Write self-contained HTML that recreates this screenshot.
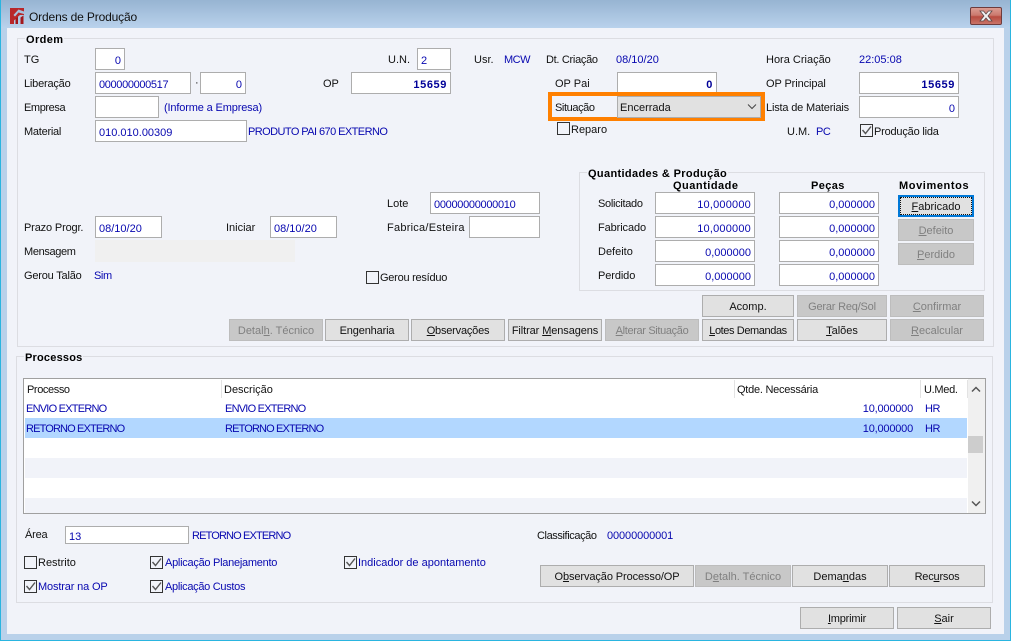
<!DOCTYPE html>
<html lang="pt"><head><meta charset="utf-8"><title>Ordens de Produção</title>
<style>
html,body{margin:0;padding:0;width:1011px;height:641px;overflow:hidden;background:#b9d1ea}
*{box-sizing:border-box}
body{font:11px/14px "Liberation Sans",sans-serif;color:#111;position:relative}
#title{position:absolute;left:0;top:0;width:1011px;height:28px;background:linear-gradient(#97b4d2,#b9d2ec)}
#frameb{position:absolute;left:0;top:0;width:1011px;height:641px;border:1px solid #2ab5e0;border-top:0;pointer-events:none}
#client{position:absolute;left:7px;top:28px;width:997px;height:606px;background:#f1f3f9}
.a{position:absolute}
.t{position:absolute;white-space:nowrap;height:14px;line-height:14px;margin-top:1px}
.u{color:#0808b0}
.l{font-weight:bold;color:#000;background:#f1f3f9;padding:0 1px}
.h{font-weight:bold;color:#000}
.g{position:absolute;border:1px solid #dcdde2}
.i{position:absolute;background:#fff;border:1px solid #adadad;height:22px;line-height:25px;color:#0808b0;padding:0 3px;white-space:nowrap;overflow:hidden}
.r{text-align:right}
.n{font-weight:bold;color:#000098;letter-spacing:.6px}
.b{position:absolute;height:22px;background:#e1e1e1;border:1px solid #adadad;text-align:center;line-height:22px;color:#111;white-space:nowrap}
.d{background:#c8c8c8;border-color:#bdbdbd;color:#808080}
.c{position:absolute;width:13px;height:13px;border:1px solid #333}
.c svg{position:absolute;left:0;top:0}
</style></head><body>
<div id="title"></div>
<svg class="a" style="left:10px;top:8px" width="15" height="16" viewBox="0 0 15 16"><path d="M0 0h14v3.500L8.500 1.500 3.500 7 5 8.500 8.500 4.500 14 6v1H10L7 9.500 4 12.500V16H0z" fill="#b9272a"/><path d="M5.500 10.500L8 8.500V16H5.500zM10.500 9.500L13.500 7.500V16H10.500z" fill="#a3181d"/></svg>
<div class="t" style="left:29px;top:9px;font-size:12px;color:#111;letter-spacing:-.15px">Ordens de Produção</div>
<div class="a" style="left:970px;top:7px;width:32px;height:18px;border:1px solid #6e3c3c;border-radius:2px;background:linear-gradient(#dc9d93 0,#cb7a6e 45%,#b84c40 55%,#c97468 100%)"></div>
<svg class="a" style="left:978px;top:10px" width="16" height="12" viewBox="0 0 16 12"><path d="M2 1h3.500L8 4l2.500-3H14l-4 5 4 5h-3.500L8 8l-2.500 3H2l4-5z" fill="#f2f2f2" stroke="#5c4a4a" stroke-width=".8"/></svg>
<div id="client"></div>
<div id="frameb"></div>

<!-- Ordem -->
<div class="g" style="left:17px;top:38px;width:977px;height:309px"></div>
<div class="t l" style="left:25px;top:32px;letter-spacing:.4px">Ordem</div>
<div class="t" style="left:24px;top:52px">TG</div>
<div class="i r" style="left:95px;top:48px;width:30px">0</div>
<div class="t" style="left:24px;top:76px;letter-spacing:-.2px">Liberação</div>
<div class="i" style="left:95px;top:72px;width:96px;letter-spacing:-.35px">000000000517</div>
<div class="t" style="left:195px;top:75px">·</div>
<div class="i r" style="left:200px;top:72px;width:46px">0</div>
<div class="t" style="left:24px;top:100px;letter-spacing:-.4px">Empresa</div>
<div class="i" style="left:95px;top:96px;width:64px"></div>
<div class="t u" style="left:164px;top:100px;letter-spacing:-.15px">(Informe a Empresa)</div>
<div class="t" style="left:24px;top:124px;letter-spacing:-.25px">Material</div>
<div class="i" style="left:95px;top:120px;width:152px">010.010.00309</div>
<div class="t u" style="left:248px;top:124px;letter-spacing:-.57px">PRODUTO PAI 670 EXTERNO</div>
<div class="t" style="left:388px;top:52px">U.N.</div>
<div class="i" style="left:417px;top:48px;width:34px">2</div>
<div class="t" style="left:323px;top:76px">OP</div>
<div class="i r n" style="left:351px;top:72px;width:100px">15659</div>
<div class="t" style="left:474px;top:52px">Usr.</div>
<div class="t u" style="left:504px;top:52px;letter-spacing:-.5px">MCW</div>
<div class="t" style="left:546px;top:52px;letter-spacing:-.3px">Dt. Criação</div>
<div class="t u" style="left:616px;top:52px">08/10/20</div>
<div class="t" style="left:766px;top:52px">Hora Criação</div>
<div class="t u" style="left:859px;top:52px">22:05:08</div>
<div class="t" style="left:555px;top:76px">OP Pai</div>
<div class="i r n" style="left:617px;top:72px;width:100px">0</div>
<div class="t" style="left:766px;top:76px;letter-spacing:-.1px">OP Principal</div>
<div class="i r n" style="left:859px;top:72px;width:100px">15659</div>
<div class="a" style="left:548px;top:92px;width:217px;height:29px;border:4px solid #ff8000"></div>
<div class="t" style="left:555px;top:100px;letter-spacing:-.4px">Situação</div>
<div class="i" style="left:617px;top:96px;width:144px;background:#e1e1e1;color:#111;line-height:22px;padding-left:2px">Encerrada</div>
<svg class="a" style="left:747px;top:104px" width="10" height="6" viewBox="0 0 10 6"><path d="M1 .5l4 4 4-4" fill="none" stroke="#444" stroke-width="1"/></svg>
<div class="t" style="left:766px;top:100px;letter-spacing:-.18px">Lista de Materiais</div>
<div class="i r u" style="left:859px;top:96px;width:100px">0</div>
<div class="c" style="left:557px;top:122px"></div>
<div class="t" style="left:571px;top:122px">Reparo</div>
<div class="t" style="left:787px;top:124px">U.M.</div>
<div class="t u" style="left:816px;top:124px;letter-spacing:-.5px">PC</div>
<div class="c" style="left:860px;top:124px"><svg width="11" height="11" viewBox="0 0 11 11"><path d="M1.500 5l3 3.500L10 1.500" fill="none" stroke="#555" stroke-width="1.400"/></svg></div>
<div class="t" style="left:874px;top:124px;letter-spacing:-.2px">Produção lida</div>

<div class="t" style="left:387px;top:196px">Lote</div>
<div class="i" style="left:430px;top:192px;width:110px;letter-spacing:-.3px">00000000000010</div>
<div class="t" style="left:24px;top:220px;letter-spacing:-.15px">Prazo Progr.</div>
<div class="i" style="left:95px;top:216px;width:67px">08/10/20</div>
<div class="t" style="left:226px;top:220px">Iniciar</div>
<div class="i" style="left:270px;top:216px;width:67px">08/10/20</div>
<div class="t" style="left:387px;top:220px;letter-spacing:.25px">Fabrica/Esteira</div>
<div class="i" style="left:469px;top:216px;width:71px"></div>
<div class="t" style="left:24px;top:244px;letter-spacing:-.35px">Mensagem</div>
<div class="a" style="left:95px;top:240px;width:200px;height:22px;background:#f0f0f0"></div>
<div class="t" style="left:24px;top:268px;letter-spacing:-.2px">Gerou Talão</div>
<div class="t u" style="left:94px;top:268px;letter-spacing:-.4px">Sim</div>
<div class="c" style="left:366px;top:271px"></div>
<div class="t" style="left:380px;top:270px;letter-spacing:-.25px">Gerou resíduo</div>

<!-- Quantidades -->
<div class="g" style="left:579px;top:172px;width:406px;height:119px"></div>
<div class="t l" style="left:587px;top:166px;letter-spacing:.35px">Quantidades &amp; Produção</div>
<div class="t h" style="left:673px;top:178px;letter-spacing:.5px">Quantidade</div>
<div class="t h" style="left:811px;top:178px;letter-spacing:.4px">Peças</div>
<div class="t h" style="left:899px;top:178px;letter-spacing:.6px">Movimentos</div>
<div class="t" style="left:598px;top:196px;letter-spacing:-.3px">Solicitado</div>
<div class="t" style="left:598px;top:220px;letter-spacing:-.1px">Fabricado</div>
<div class="t" style="left:598px;top:244px">Defeito</div>
<div class="t" style="left:598px;top:268px;letter-spacing:-.1px">Perdido</div>
<div class="i r" style="left:655px;top:192px;width:100px;letter-spacing:.2px">10,000000</div>
<div class="i r" style="left:655px;top:216px;width:100px;letter-spacing:.2px">10,000000</div>
<div class="i r" style="left:655px;top:240px;width:100px">0,000000</div>
<div class="i r" style="left:655px;top:264px;width:100px">0,000000</div>
<div class="i r" style="left:779px;top:192px;width:100px">0,000000</div>
<div class="i r" style="left:779px;top:216px;width:100px">0,000000</div>
<div class="i r" style="left:779px;top:240px;width:100px">0,000000</div>
<div class="i r" style="left:779px;top:264px;width:100px">0,000000</div>
<div class="b" style="left:898px;top:195px;width:76px;border:2px solid #0078d7;line-height:20px;outline:1px dotted #111;outline-offset:-3px"><u>F</u>abricado</div>
<div class="b d" style="left:898px;top:219px;width:76px"><u>D</u>efeito</div>
<div class="b d" style="left:898px;top:243px;width:76px"><u>P</u>erdido</div>

<div class="b" style="left:702px;top:295px;width:92px">Acomp.</div>
<div class="b d" style="left:797px;top:295px;width:90px;letter-spacing:-.2px">Gerar Req/Sol</div>
<div class="b d" style="left:890px;top:295px;width:94px"><u>C</u>onfirmar</div>
<div class="b d" style="left:229px;top:319px;width:94px">Detal<u>h</u>. Técnico</div>
<div class="b" style="left:325px;top:319px;width:84px;letter-spacing:-.15px">En<u>g</u>enharia</div>
<div class="b" style="left:411px;top:319px;width:94px;letter-spacing:-.2px"><u>O</u>bservações</div>
<div class="b" style="left:508px;top:319px;width:94px;letter-spacing:-.1px">Filtrar <u>M</u>ensagens</div>
<div class="b d" style="left:605px;top:319px;width:94px;letter-spacing:-.35px"><u>A</u>lterar Situação</div>
<div class="b" style="left:702px;top:319px;width:92px;letter-spacing:-.4px"><u>L</u>otes Demandas</div>
<div class="b" style="left:797px;top:319px;width:90px"><u>T</u>alões</div>
<div class="b d" style="left:890px;top:319px;width:94px"><u>R</u>ecalcular</div>

<!-- Processos -->
<div class="g" style="left:16px;top:356px;width:977px;height:247px"></div>
<div class="t l" style="left:24px;top:350px;letter-spacing:.2px">Processos</div>
<div class="a" style="left:23px;top:378px;width:963px;height:136px;background:#fff;border:1px solid #a0a0a0"></div>
<div class="a" style="left:25px;top:418px;width:942px;height:20px;background:#b2d7ff"></div>
<div class="a" style="left:25px;top:458px;width:942px;height:20px;background:#f1f3f9"></div>
<div class="a" style="left:25px;top:498px;width:942px;height:15px;background:#f1f3f9"></div>
<div class="a" style="left:221px;top:380px;width:1px;height:18px;background:#e3e3e3"></div>
<div class="a" style="left:734px;top:380px;width:1px;height:18px;background:#e3e3e3"></div>
<div class="a" style="left:920px;top:380px;width:1px;height:18px;background:#e3e3e3"></div>
<div class="a" style="left:967px;top:380px;width:1px;height:18px;background:#e3e3e3"></div>
<div class="t" style="left:27px;top:382px;letter-spacing:-.4px">Processo</div>
<div class="t" style="left:224px;top:382px">Descrição</div>
<div class="t" style="left:737px;top:382px;letter-spacing:-.25px">Qtde. Necessária</div>
<div class="t" style="left:924px;top:382px;letter-spacing:-.3px">U.Med.</div>
<div class="t u" style="left:26px;top:401px;letter-spacing:-.77px">ENVIO EXTERNO</div>
<div class="t u" style="left:225px;top:401px;letter-spacing:-.77px">ENVIO EXTERNO</div>
<div class="t u" style="right:98px;top:401px;letter-spacing:-.2px">10,000000</div>
<div class="t u" style="left:925px;top:401px;letter-spacing:-.5px">HR</div>
<div class="t u" style="left:26px;top:421px;letter-spacing:-.85px">RETORNO EXTERNO</div>
<div class="t u" style="left:225px;top:421px;letter-spacing:-.85px">RETORNO EXTERNO</div>
<div class="t u" style="right:98px;top:421px;letter-spacing:-.2px">10,000000</div>
<div class="t u" style="left:925px;top:421px;letter-spacing:-.5px">HR</div>
<div class="a" style="left:968px;top:379px;width:17px;height:134px;background:#f0f0f0"></div>
<div class="a" style="left:968px;top:436px;width:15px;height:17px;background:#cdcdcd"></div>
<svg class="a" style="left:971px;top:386px" width="10" height="7" viewBox="0 0 10 7"><path d="M1 5.500L5 1.500l4 4" fill="none" stroke="#555" stroke-width="1.500"/></svg>
<svg class="a" style="left:971px;top:500px" width="10" height="7" viewBox="0 0 10 7"><path d="M1 1.500l4 4 4-4" fill="none" stroke="#555" stroke-width="1.500"/></svg>

<div class="t" style="left:25px;top:527px;letter-spacing:-.2px">Área</div>
<div class="i" style="left:65px;top:526px;width:124px;height:18px;line-height:21px">13</div>
<div class="t u" style="left:192px;top:528px;letter-spacing:-.85px">RETORNO EXTERNO</div>
<div class="t" style="left:537px;top:528px;letter-spacing:-.4px">Classificação</div>
<div class="t u" style="left:607px;top:528px;letter-spacing:-.1px">00000000001</div>
<div class="c" style="left:24px;top:556px"></div>
<div class="t" style="left:38px;top:555px">Restrito</div>
<div class="c" style="left:24px;top:580px"><svg width="11" height="11" viewBox="0 0 11 11"><path d="M1.500 5l3 3.500L10 1.500" fill="none" stroke="#555" stroke-width="1.400"/></svg></div>
<div class="t u" style="left:38px;top:579px;letter-spacing:-.15px">Mostrar na OP</div>
<div class="c" style="left:150px;top:556px"><svg width="11" height="11" viewBox="0 0 11 11"><path d="M1.500 5l3 3.500L10 1.500" fill="none" stroke="#555" stroke-width="1.400"/></svg></div>
<div class="t u" style="left:165px;top:555px;letter-spacing:-.27px">Aplicação Planejamento</div>
<div class="c" style="left:150px;top:580px"><svg width="11" height="11" viewBox="0 0 11 11"><path d="M1.500 5l3 3.500L10 1.500" fill="none" stroke="#555" stroke-width="1.400"/></svg></div>
<div class="t u" style="left:165px;top:579px;letter-spacing:-.3px">Aplicação Custos</div>
<div class="c" style="left:344px;top:556px"><svg width="11" height="11" viewBox="0 0 11 11"><path d="M1.500 5l3 3.500L10 1.500" fill="none" stroke="#555" stroke-width="1.400"/></svg></div>
<div class="t u" style="left:358px;top:555px">Indicador de apontamento</div>

<div class="b" style="left:540px;top:565px;width:154px;letter-spacing:-.1px">O<u>b</u>servação Processo/OP</div>
<div class="b d" style="left:695px;top:565px;width:96px">D<u>e</u>talh. Técnico</div>
<div class="b" style="left:792px;top:565px;width:96px">Dema<u>n</u>das</div>
<div class="b" style="left:889px;top:565px;width:96px;letter-spacing:-.2px">Rec<u>u</u>rsos</div>
<div class="b" style="left:800px;top:607px;width:94px;letter-spacing:-.2px"><u>I</u>mprimir</div>
<div class="b" style="left:897px;top:607px;width:94px"><u>S</u>air</div>
</body></html>
